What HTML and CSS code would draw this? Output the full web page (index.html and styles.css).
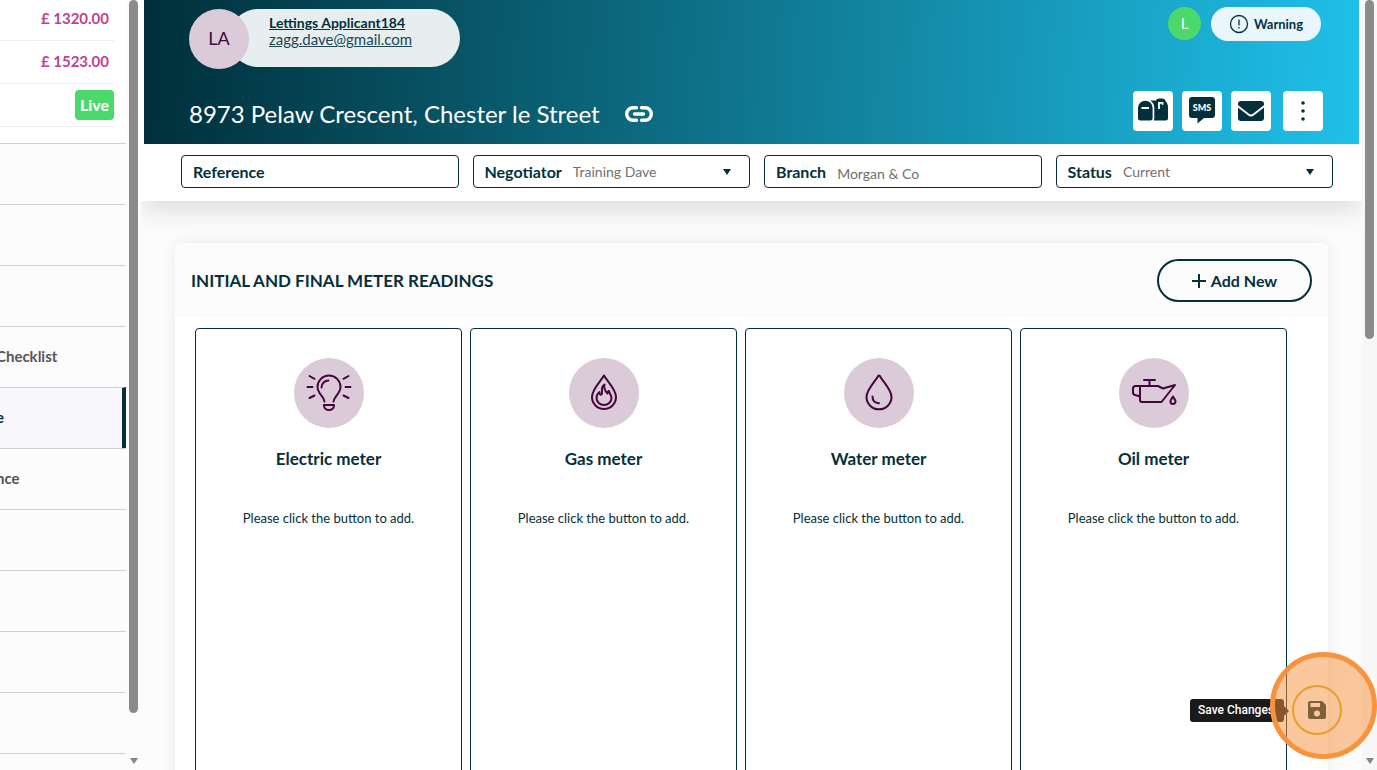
FILE: index.html
```
<!DOCTYPE html>
<html lang="en">

<head>
    <meta charset="UTF-8">
    <meta name="viewport" content="width=device-width, initial-scale=1.0">
    <title>Meter Readings</title>
    <link rel="stylesheet" href="styles.css">
</head>

<body>
    <aside class="sidebar">
        <div class="amounts">
            <div class="amount-row">£ 1320.00</div>
            <div class="amount-row">£ 1523.00</div>
            <div class="amount-row"><span class="live">Live</span></div>
        </div>
        <nav class="side-nav">
            <a href="#" aria-label="Section 1"></a>
            <a href="#" aria-label="Section 2"></a>
            <a href="#" aria-label="Section 3"></a>
            <a href="#">Checklist</a>
            <a href="#" class="active">e</a>
            <a href="#">nce</a>
            <a href="#" aria-label="Section 7"></a>
            <a href="#" aria-label="Section 8"></a>
            <a href="#" aria-label="Section 9"></a>
            <a href="#" aria-label="Section 10"></a>
            <a href="#" aria-label="Section 11"></a>
        </nav>
    </aside>
    <div class="scroll side-scroll">
        <div class="thumb"></div>
        <div class="arrow"></div>
    </div>

    <main class="content">
        <div class="top">
            <header class="banner">
                <div class="banner-row">
                    <div class="person">
                        <div class="avatar">LA</div>
                        <div class="person-info">
                            <a href="#" class="person-name">Lettings Applicant184</a>
                            <a href="#">zagg.dave@gmail.com</a>
                        </div>
                    </div>
                    <div class="badges">
                        <span class="initial">L</span>
                        <button class="warning">
                            <svg width="20" height="20" viewBox="0 0 20 20" fill="none" stroke="#04303b">
                                <circle cx="10" cy="10" r="8.5" stroke-width="1.3" />
                                <path d="M10 5.5v6M10 13v1.5" stroke-width="1.3" />
                            </svg>
                            Warning
                        </button>
                    </div>
                </div>
                <div class="banner-row bottom-row">
                    <h1>8973 Pelaw Crescent, Chester le Street
                        <svg width="28" height="18" viewBox="0 0 28 18" fill="none" stroke="#fff" stroke-width="3.4" stroke-linecap="round">
                            <path d="M11.5 2.7H8a6.3 6.3 0 0 0 0 12.6h3.5M16.5 2.7H20a6.3 6.3 0 0 1 0 12.6h-3.5M9.5 9h9" />
                        </svg>
                    </h1>
                    <div class="actions">
                        <button aria-label="Post">
                            <svg width="30" height="26" viewBox="0 0 30 26" fill="#04303b">
                                <path d="M0 10a7.3 7.3 0 0 1 14.600 0v10a2.500 2.500 0 0 1-2.500 2.500H2.500A2.500 2.500 0 0 1 0 20z" />
                                <path d="M12 2.500c2.700 1.500 4.300 4 4.300 7.500v10q0 1.500-.7 2.500H27.500a2.500 2.500 0 0 0 2.500-2.500V9c0-2.500-1-4.500-2.500-6A3 3 0 0 0 24.500.5H21a3 3 0 0 0-3 2z" />
                                <path d="M3.500 10h7.500M21 11V4.800h3.500v2" fill="none" stroke="#fff" stroke-width="1.800" />
                            </svg>
                        </button>
                        <button aria-label="SMS">
                            <svg width="28" height="30" viewBox="0 0 28 30">
                                <path d="M4 1h20a3 3 0 0 1 3 3v15a3 3 0 0 1-3 3h-8l-6.500 5.500V22H4a3 3 0 0 1-3-3V4a3 3 0 0 1 3-3z" fill="#04303b" />
                                <text x="14" y="15" class="sms" text-anchor="middle">SMS</text>
                            </svg>
                        </button>
                        <button aria-label="Email">
                            <svg width="28" height="22" viewBox="0 0 28 22">
                                <rect x="1" y="1" width="26" height="20" rx="3" fill="#04303b" />
                                <path d="M0 5.500l11.500 9a4 4 0 0 0 5 0l11.500-9" fill="none" stroke="#fff" stroke-width="1.800" />
                            </svg>
                        </button>
                        <button aria-label="More" class="more">
                            <svg width="6" height="22" viewBox="0 0 6 22" fill="#04303b">
                                <circle cx="3" cy="3" r="1.800" />
                                <circle cx="3" cy="11" r="1.800" />
                                <circle cx="3" cy="19" r="1.800" />
                            </svg>
                        </button>
                    </div>
                </div>
            </header>
            <form class="filters">
                <div class="field">
                    <label for="reference">Reference</label>
                    <input id="reference" type="text">
                </div>
                <div class="field">
                    <label for="negotiator">Negotiator</label>
                    <select id="negotiator">
                        <option>Training Dave</option>
                    </select>
                    <svg width="8" height="6" viewBox="0 0 8 6"><path d="M0 0h8L4 6z" fill="#04303b" /></svg>
                </div>
                <div class="field">
                    <label for="branch">Branch</label>
                    <input id="branch" type="text" value="Morgan &amp; Co">
                </div>
                <div class="field">
                    <label for="status">Status</label>
                    <select id="status">
                        <option>Current</option>
                    </select>
                    <svg width="8" height="6" viewBox="0 0 8 6"><path d="M0 0h8L4 6z" fill="#04303b" /></svg>
                </div>
            </form>
        </div>

        <section class="panel">
            <div class="panel-head">
                <h2>INITIAL AND FINAL METER READINGS</h2>
                <button class="add-new">
                    <svg width="14" height="14" viewBox="0 0 14 14" stroke="#04303b" stroke-width="2"><path d="M7 0v14M0 7h14" /></svg>
                    Add New
                </button>
            </div>
            <div class="meters">
                <article class="meter">
                    <div class="meter-icon">
                        <svg width="46" height="38" viewBox="0 0 46 38">
                            <path d="M18.500 27.500c-.5-5-7-8-7-14.500a11.500 11.500 0 0 1 23 0c0 6.500-6.500 9.500-7 14.500" />
                            <path d="M15.500 13.500a7 7 0 0 1 7-7M18 31h10v.5a5 4.500 0 0 1-10 0zM3.500 2l5 2.800M1.500 13h5M3.500 24l5-2.500M42.500 2l-5 2.800M44.500 13h-5M42.500 24l-5-2.500" />
                        </svg>
                    </div>
                    <h3>Electric meter</h3>
                    <p>Please click the button to add.</p>
                </article>
                <article class="meter">
                    <div class="meter-icon">
                        <svg width="28" height="38" viewBox="0 0 28 38">
                            <path d="M14 1.500C11 7 2 15 2 23a12 12 0 0 0 24 0C26 15 17 7 14 1.500z" />
                            <path d="M14.500 10.500c-5 3-1 8-3 10-1.200.8-2-.2-2-2.500-2 1.500-3 3.500-3 6a7.500 7 0 0 0 15 0c0-3-2-4-2.500-7-1 .5-1.500 1.500-1.500 2.500-2-2-4-5-3-9z" />
                        </svg>
                    </div>
                    <h3>Gas meter</h3>
                    <p>Please click the button to add.</p>
                </article>
                <article class="meter">
                    <div class="meter-icon">
                        <svg width="28" height="38" viewBox="0 0 28 38">
                            <path d="M13 2.200q1-1.400 2 0C18 8 26.500 15.500 26.500 23a12.500 12.300 0 0 1-25 0C1.500 15.500 10 8 13 2.200z" />
                            <path d="M7.500 22.500c0 4 2.500 6.500 6.500 6.800" />
                        </svg>
                    </div>
                    <h3>Water meter</h3>
                    <p>Please click the button to add.</p>
                </article>
                <article class="meter">
                    <div class="meter-icon">
                        <svg width="46" height="30" viewBox="0 0 46 30">
                            <path d="M13 2h11M18.500 2v6M9 8h18l5 2.500L44 7 30.500 24H11a2 2 0 0 1-2-2zM9 8H4.500Q2 8 2 10.500v4q0 2 2 2.500l5 1.500" />
                            <path d="M42 18.500c-1 2-2.500 3-2.500 5a2.500 2.500 0 0 0 5 0c0-2-1.500-3-2.500-5z" />
                        </svg>
                    </div>
                    <h3>Oil meter</h3>
                    <p>Please click the button to add.</p>
                </article>
            </div>
        </section>
    </main>
    <div class="scroll page-scroll">
        <div class="thumb"></div>
        <div class="arrow"></div>
    </div>

    <div class="save-area">
        <span class="tooltip">Save Changes</span>
        <button class="save" aria-label="Save Changes">
            <svg width="18" height="18" viewBox="0 0 18 18" fill="#04303b" fill-rule="evenodd">
                <path d="M2 0h12l4 4v12a2 2 0 0 1-2 2H2a2 2 0 0 1-2-2V2a2 2 0 0 1 2-2zM2.500 2v4H12V2zM9 9.500a3 3 0 1 0 0 6 3 3 0 0 0 0-6z" />
            </svg>
        </button>
    </div>
    <div class="highlight"></div>
</body>

</html>
```
FILE: styles.css
```
* {
    margin: 0;
    padding: 0;
    box-sizing: border-box;
}

body {
    display: grid;
    grid-template-columns: 126px 15px 1fr 15px;
    height: 100vh;
    overflow: hidden;
    background: #fcfcfc;
    color: #04303b;
    font-family: Lato, sans-serif;
    font-size: 14px;
}

button,
input,
select {
    font: inherit;
    color: inherit;
    border: none;
    outline: none;
    background: none;
}

button {
    cursor: pointer;
}

svg {
    flex-shrink: 0;
}

/* left column */
.sidebar {
    overflow: hidden;
}

.amounts {
    height: 143px;
    padding-right: 12px;
    background: #fff;
}

.amount-row {
    display: flex;
    align-items: center;
    justify-content: flex-end;
    height: 43px;
    padding: 0 5px 2px 0;
    border-bottom: 1px solid #eee;
    font-size: 15px;
    font-weight: bold;
    color: #bf4290;
}

.amount-row:first-child {
    height: 41px;
    padding-bottom: 4px;
}

.amount-row:last-child {
    padding: 0;
}

.live {
    height: 30px;
    padding: 0 5px;
    border-radius: 4px;
    background: #4cd96c;
    color: #fff;
    font-size: 16px;
    line-height: 29px;
}

.side-nav a {
    display: flex;
    align-items: center;
    height: 61px;
    padding-bottom: 3px;
    border-top: 1px solid #d0d0d0;
    color: #555;
    font-size: 15px;
    font-weight: bold;
    text-decoration: none;
    text-indent: -4px;
}

.side-nav .active {
    border-right: 4px solid #04303b;
    background: #f8f8fd;
    color: #04303b;
}

/* scrollbars */
.scroll {
    display: flex;
    flex-direction: column;
    align-items: center;
    justify-content: space-between;
    padding-bottom: 6px;
}

.thumb {
    width: 9px;
    height: 713px;
    border-radius: 5px;
    background: #8b8b8b;
}

.page-scroll {
    background: #f7f7f7;
}

.page-scroll .thumb {
    height: 339px;
}

.arrow {
    border: 4px solid transparent;
    border-top: 6px solid #858585;
    border-bottom: 0;
}

/* header */
.content {
    overflow: hidden;
}

.top {
    background: #fff;
    box-shadow: 0 10px 24px rgba(0, 0, 0, 0.12);
}

.banner {
    display: flex;
    flex-direction: column;
    justify-content: space-between;
    height: 144px;
    margin: 0 3px;
    padding: 7px 36px 13px 45px;
    background: linear-gradient(93deg, #002f3a, #0d6b81 42%, #1fc0ea);
}

.banner-row {
    display: flex;
    justify-content: space-between;
}

.person {
    display: flex;
    padding-top: 2px;
}

.avatar {
    position: relative;
    width: 60px;
    height: 60px;
    border-radius: 50%;
    background: #dbcbd9;
    color: #45063f;
    font-size: 18px;
    line-height: 59px;
    text-align: center;
}

.person-info {
    display: flex;
    flex-direction: column;
    width: 231px;
    height: 58px;
    margin-left: -20px;
    padding: 5px 40px;
    border-radius: 29px;
    background: #e6eef0;
}

.person-info a {
    color: #1c4650;
    font-size: 15px;
    line-height: 17px;
}

.person-info .person-name {
    color: #04303b;
    font-size: 14px;
    font-weight: bold;
}

.badges {
    display: flex;
    gap: 10px;
    padding-right: 2px;
}

.initial {
    width: 33px;
    height: 33px;
    border-radius: 50%;
    background: #4cd96c;
    color: #fff;
    font-size: 15px;
    line-height: 33px;
    text-align: center;
}

.warning {
    display: flex;
    align-items: center;
    justify-content: center;
    gap: 5px;
    width: 110px;
    height: 34px;
    border-radius: 17px;
    background: #e9f7fc;
    font-size: 13px;
    font-weight: bold;
}

.bottom-row {
    align-items: center;
}

h1 {
    display: flex;
    align-items: center;
    gap: 25px;
    padding-top: 5px;
    color: #fff;
    font-size: 24px;
    font-weight: normal;
}

.actions {
    display: flex;
    gap: 9px;
}

.actions button {
    display: flex;
    align-items: center;
    justify-content: center;
    width: 40px;
    height: 40px;
    border-radius: 4px;
    background: #fff;
}

.actions .more {
    margin-left: 3px;
}

.sms {
    fill: #fff;
    font-size: 9px;
    font-weight: 900;
}

/* filter bar */
.filters {
    display: grid;
    grid-template-columns: repeat(4, minmax(0, 1fr));
    gap: 14px;
    padding: 11px 29px 13px 40px;
}

.field {
    display: flex;
    align-items: center;
    gap: 11px;
    height: 33px;
    padding: 0 18px 0 11px;
    border: 1px solid #04303b;
    border-radius: 4px;
}

.field label {
    font-size: 16px;
    font-weight: bold;
}

.field input,
.field select {
    flex: 1;
    min-width: 0;
    appearance: none;
    color: #707070;
    font-size: 14px;
}

.field input {
    padding-top: 3px;
}

/* meter readings */
.panel {
    margin: 42px 34px 0;
    border-radius: 6px;
    background: #fff;
    box-shadow: 0 0 16px rgba(0, 0, 0, 0.08);
}

.panel-head {
    display: flex;
    align-items: center;
    justify-content: space-between;
    height: 75px;
    padding: 0 16px;
    border-radius: 6px 6px 0 0;
    background: #fcfcfc;
}

h2 {
    font-size: 17px;
    font-weight: bold;
}

.add-new {
    display: flex;
    align-items: center;
    justify-content: center;
    gap: 5px;
    width: 155px;
    height: 43px;
    border: 2px solid #04303b;
    border-radius: 22px;
    font-size: 16px;
    font-weight: bold;
}

.meters {
    display: grid;
    grid-template-columns: repeat(4, minmax(0, 1fr));
    gap: 8px;
    padding: 10px 41px 20px 20px;
}

.meter {
    display: flex;
    flex-direction: column;
    align-items: center;
    min-height: 500px;
    padding-top: 29px;
    border: 1px solid #04303b;
    border-radius: 4px;
}

.meter-icon {
    display: flex;
    align-items: center;
    justify-content: center;
    width: 70px;
    height: 70px;
    border-radius: 50%;
    background: #dbcbd9;
}

.meter-icon svg {
    fill: none;
    stroke: #45063f;
    stroke-width: 2;
    stroke-linecap: round;
    stroke-linejoin: round;
}

h3 {
    margin-top: 19px;
    font-size: 17px;
    font-weight: bold;
    line-height: 24px;
}

.meter p {
    margin-top: 37px;
    font-size: 13px;
    line-height: 20px;
}

/* floating save button */
.save-area {
    position: fixed;
    right: 35px;
    bottom: 35px;
    display: flex;
    align-items: center;
    gap: 8px;
}

.tooltip {
    position: relative;
    width: 94px;
    height: 23px;
    padding-left: 8px;
    border-radius: 3px;
    background: #1a1a1a;
    color: #fff;
    font-family: Roboto, sans-serif;
    font-size: 12px;
    font-weight: 500;
    line-height: 22px;
    white-space: nowrap;
}

.tooltip::after {
    content: "";
    position: absolute;
    top: 7px;
    left: 100%;
    border: 5px solid transparent;
    border-left-color: #1a1a1a;
    border-right: 0;
}

.save {
    display: flex;
    align-items: center;
    justify-content: center;
    width: 50px;
    height: 50px;
    border: 2px solid #dba818;
    border-radius: 50%;
}

.highlight {
    position: fixed;
    right: 0;
    bottom: 11px;
    width: 107px;
    height: 107px;
    border: 5px solid #f8923c;
    border-radius: 50%;
    background: rgba(248, 146, 60, 0.5);
    pointer-events: none;
}
```
